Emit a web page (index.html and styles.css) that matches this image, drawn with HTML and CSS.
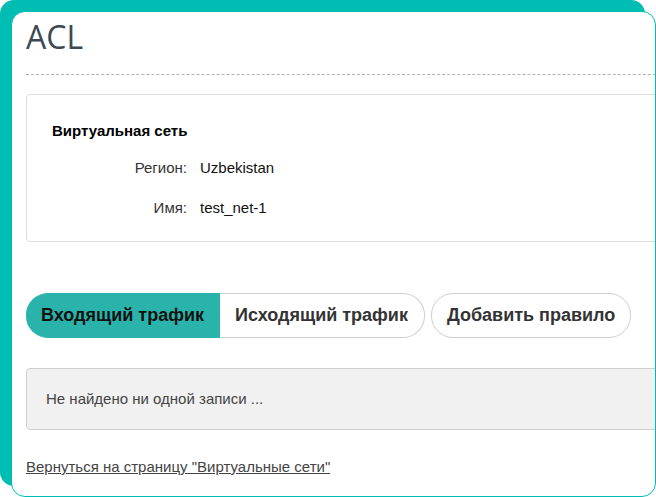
FILE: index.html
```html
<!DOCTYPE html>
<html>

<head>
    <meta charset="utf-8">
    <title>ACL</title>
    <link rel="stylesheet" href="styles.css">
</head>

<body>
    <div class="card">
        <div class="inner">
            <h1 class="title">ACL</h1>
            <hr class="dash">

            <div class="info">
                <div class="info-head">Виртуальная сеть</div>
                <div class="row">
                    <span class="lbl">Регион:</span>
                    <span class="val">Uzbekistan</span>
                </div>
                <div class="row">
                    <span class="lbl">Имя:</span>
                    <span class="val">test_net-1</span>
                </div>
            </div>

            <div class="btns">
                <div class="tabs">
                    <button class="tab active">Входящий трафик</button>
                    <button class="tab">Исходящий трафик</button>
                </div>
                <button class="add">Добавить правило</button>
            </div>

            <div class="empty">Не найдено ни одной записи ...</div>

            <a class="back" href="#">Вернуться на страницу "Виртуальные сети"</a>
        </div>
    </div>
</body>

</html>
```

FILE: styles.css
```css
body {
    margin: 0;
    background: #fff;
    font-family: "Liberation Sans", Arial, sans-serif;
}

.card {
    box-sizing: border-box;
    width: 645px;
    height: 486px;
    margin: 11px 0 0 11px;
    border: 1px solid #00bdb4;
    border-radius: 14px;
    background: #fff;
    box-shadow: -11px -11px 0 0 #00bdb4;
    overflow: hidden;
}

.inner {
    width: 700px;
    padding-left: 14px;
}

.title {
    margin: 0;
    padding-top: 5px;
    font-family: "Open Sans", sans-serif;
    font-weight: normal;
    font-size: 32px;
    line-height: 40px;
    color: #3c4a56;
}

.dash {
    margin: 17px 0 0 0;
    border: none;
    border-top: 1px dashed #b4b4b4;
    height: 0;
}

.info {
    margin-top: 19px;
    border: 1px solid #dcdcdc;
    border-radius: 4px;
    padding: 26px 25px 14px;
    font-size: 15px;
}

.info-head {
    font-weight: bold;
    line-height: 20px;
    color: #000;
    margin-bottom: 6px;
}

.row {
    display: flex;
    align-items: center;
    height: 40px;
}

.lbl {
    width: 135px;
    text-align: right;
    color: #333;
}

.val {
    margin-left: 13px;
    color: #111;
}

.btns {
    display: flex;
    gap: 6px;
    margin-top: 51px;
}

.tabs {
    display: flex;
}

.tab,
.add {
    height: 45px;
    padding: 0 15px;
    border: 1px solid #cfcfcf;
    background: #fff;
    font-family: "Liberation Sans", Arial, sans-serif;
    font-weight: bold;
    font-size: 18px;
    color: #333;
    cursor: pointer;
}

.tab {
    padding-right: 16px;
    border-radius: 0 22px 22px 0;
    border-left: none;
}

.tab.active {
    padding-right: 15px;
    background: #2ab3ab;
    border-color: #2ab3ab;
    border-radius: 22px 0 0 22px;
    color: #111;
}

.add {
    border-radius: 22px;
}

.empty {
    margin-top: 30px;
    height: 60px;
    line-height: 60px;
    padding-left: 19px;
    background: #f1f1f1;
    border: 1px solid #cfcfcf;
    border-radius: 4px;
    font-size: 15px;
    color: #444;
}

.back {
    display: inline-block;
    margin-top: 27px;
    line-height: 20px;
    font-size: 15px;
    color: #444;
}
```
